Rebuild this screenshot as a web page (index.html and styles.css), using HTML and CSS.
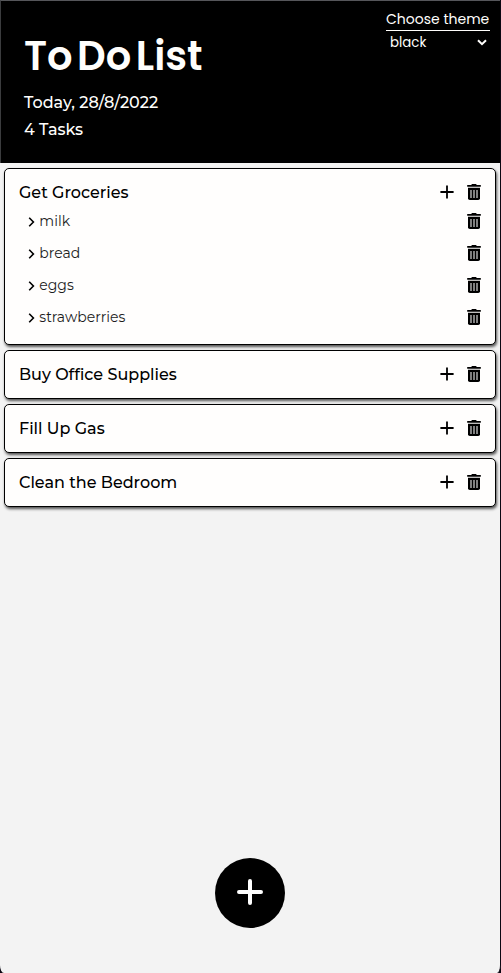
FILE: index.html
```html
<!DOCTYPE html>
<html lang="en">
<head>
<meta charset="utf-8">
<title>To Do List</title>
<link rel="stylesheet" href="styles.css">
</head>
<body>
<svg class="defs" aria-hidden="true">
  <symbol id="trash" viewBox="0 0 14 16">
    <path d="M.2 1h4L5 0h4l.8 1h4v1.800H.2z"/>
    <path d="M1 3.800h12v10.400a1.800 1.800 0 0 1-1.800 1.800H2.800A1.800 1.800 0 0 1 1 14.200z"/>
    <path class="slots" d="M3 6h2v8H3zM6 6h2v8H6zM9 6h2v8H9z"/>
  </symbol>
  <symbol id="plus" viewBox="0 0 14 14"><path d="M6.100 .4h1.800v5.700h5.700v1.800H7.900v5.700H6.100V7.900H.4V6.100h5.700z"/></symbol>
  <symbol id="chevron" viewBox="0 0 7 10"><path class="line" d="M1.200 .8l4.200 4.200-4.200 4.200"/></symbol>
</svg>
<div class="app">
  <header class="header">
    <div class="heading">
      <h1>To Do List</h1>
      <p class="date">Today, 28/8/2022</p>
      <p class="count">4 Tasks</p>
    </div>
    <div class="theme">
      <div class="label"><span>Choose theme</span></div>
      <div class="select"><span>black</span><svg class="arrow" viewBox="0 0 10 7"><path d="M1 1.200l4 4 4-4"/></svg></div>
    </div>
  </header>
  <main class="tasks">
    <section class="task">
      <div class="row"><h2>Get Groceries</h2><svg class="plus"><use href="#plus"/></svg><svg class="trash"><use href="#trash"/></svg></div>
      <ul>
        <li><svg class="chevron"><use href="#chevron"/></svg><span>milk</span><svg class="trash"><use href="#trash"/></svg></li>
        <li><svg class="chevron"><use href="#chevron"/></svg><span>bread</span><svg class="trash"><use href="#trash"/></svg></li>
        <li><svg class="chevron"><use href="#chevron"/></svg><span>eggs</span><svg class="trash"><use href="#trash"/></svg></li>
        <li><svg class="chevron"><use href="#chevron"/></svg><span>strawberries</span><svg class="trash"><use href="#trash"/></svg></li>
      </ul>
    </section>
    <section class="task"><div class="row"><h2>Buy Office Supplies</h2><svg class="plus"><use href="#plus"/></svg><svg class="trash"><use href="#trash"/></svg></div></section>
    <section class="task"><div class="row"><h2>Fill Up Gas</h2><svg class="plus"><use href="#plus"/></svg><svg class="trash"><use href="#trash"/></svg></div></section>
    <section class="task"><div class="row"><h2>Clean the Bedroom</h2><svg class="plus"><use href="#plus"/></svg><svg class="trash"><use href="#trash"/></svg></div></section>
  </main>
  <button class="add" aria-label="Add task"><svg viewBox="0 0 26 26"><path d="M13 2v22M2 13h22"/></svg></button>
</div>
</body>
</html>
```
FILE: styles.css
```css
* { box-sizing: border-box; margin: 0; padding: 0; }
body { background: #0b0712; font-family: Montserrat, Inter, sans-serif; color: #000; }
.defs { position: absolute; width: 0; height: 0; }
.slots { fill: #808080; }
.line { fill: none; stroke: #000; stroke-width: 1.6; }
.app { width: 501px; height: 973px; display: flex; flex-direction: column; background: #f3f3f3; border-right: 1px solid #0b0712; border-radius: 0 0 4px 4px / 0 0 8px 8px; overflow: hidden; }
.header { width: 501px; height: 163px; flex: none; display: flex; justify-content: space-between; background: #000; color: #fffefc; border: 1px solid #3b3c3e; border-top-color: #55565a; border-bottom: 0; padding: 0 10px 0 23px; }
.heading { padding-top: 31px; }
h1 { font: 600 40px/48px Poppins, Inter, sans-serif; word-spacing: -5px; white-space: nowrap; }
.date, .count { font-size: 16px; font-weight: 500; line-height: 27px; white-space: nowrap; }
.date { margin-top: 9px; }
.theme { width: 104px; padding-top: 8px; font: 14px/21px Poppins, Inter, sans-serif; white-space: nowrap; }
.label { height: 22px; border-bottom: 1px solid #fffefc; }
.select { height: 22px; display: flex; justify-content: space-between; align-items: center; padding: 0 3px 0 4px; font-size: 13.333px; }
.arrow { width: 10px; height: 7px; fill: none; stroke: #fffefc; stroke-width: 2; }
.tasks { display: flex; flex-direction: column; gap: 5px; padding: 5px 4px; }
.task { min-height: 49px; background: #fffefd; border: 1px solid #000; border-radius: 5px; box-shadow: 1px 2px 3px #000a; padding: 0 14px 11px; }
.task:not(:first-child) { padding-bottom: 0; }
.row { height: 47px; display: flex; align-items: center; }
.task:first-child .row { height: 36px; padding-top: 11px; }
h2 { flex: 1; font-size: 16px; font-weight: 500; line-height: 24px; }
ul { list-style: none; }
li { height: 32px; display: flex; align-items: center; font-size: 14px; font-weight: 400; }
li span { flex: 1; margin-left: 4.300px; color: #1c1c1c; }
.trash { width: 14px; height: 16px; }
.row .trash { margin-bottom: 1px; }
.plus { width: 14px; height: 14px; margin: 0 13px 1px 0; }
.chevron { width: 7px; height: 10px; margin: 1px 0 0 9px; }
.add { width: 70px; height: 70px; margin: auto auto 45px; border: 0; border-radius: 50%; background: #000; display: flex; align-items: center; justify-content: center; }
.add svg { width: 26px; height: 26px; margin-bottom: 2px; fill: none; stroke: #fff; stroke-width: 4; stroke-linecap: round; }
```
